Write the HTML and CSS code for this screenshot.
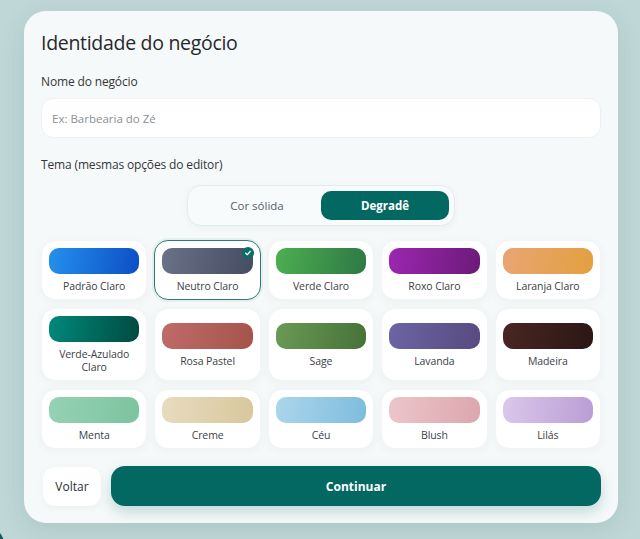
FILE: index.html
```html
<!DOCTYPE html>
<html lang="pt-BR">
<head>
<meta charset="utf-8">
<title>Identidade do negócio</title>
<link rel="stylesheet" href="styles.css">
</head>
<body>
<div class="blob"></div>
<main class="card">
  <h1 class="title">Identidade do negócio</h1>
  <label class="label" for="nome">Nome do negócio</label>
  <input id="nome" class="input" type="text" placeholder="Ex: Barbearia do Zé">
  <div class="label label-tema">Tema (mesmas opções do editor)</div>
  <div class="toggle-wrap">
    <div class="toggle">
      <button class="toggle-btn">Cor sólida</button>
      <button class="toggle-btn active">Degradê</button>
    </div>
  </div>
  <div class="grid">
    <div class="theme"><div class="swatch" style="background:linear-gradient(100deg,#2590ec,#0c4ec6)"></div><span class="name">Padrão Claro</span></div>
    <div class="theme selected"><div class="swatch" style="background:linear-gradient(100deg,#6a7288,#464c62)"></div><span class="name">Neutro Claro</span><span class="check"><svg viewBox="0 0 12 12" width="8" height="8"><path d="M2.5 6.3 L5 8.6 L9.5 3.4" fill="none" stroke="#fff" stroke-width="1.8" stroke-linecap="round" stroke-linejoin="round"/></svg></span></div>
    <div class="theme"><div class="swatch" style="background:linear-gradient(100deg,#4caf50,#2f7845)"></div><span class="name">Verde Claro</span></div>
    <div class="theme"><div class="swatch" style="background:linear-gradient(100deg,#9c27b0,#6c1a78)"></div><span class="name">Roxo Claro</span></div>
    <div class="theme"><div class="swatch" style="background:linear-gradient(100deg,#e8a574,#e3a03e)"></div><span class="name">Laranja Claro</span></div>

    <div class="theme"><div class="swatch" style="background:linear-gradient(100deg,#00897b,#004a40)"></div><span class="name">Verde-Azulado Claro</span></div>
    <div class="theme"><div class="swatch" style="background:linear-gradient(100deg,#c06a6a,#a5544a)"></div><span class="name">Rosa Pastel</span></div>
    <div class="theme"><div class="swatch" style="background:linear-gradient(100deg,#6a9a55,#467238)"></div><span class="name">Sage</span></div>
    <div class="theme"><div class="swatch" style="background:linear-gradient(100deg,#6c64a4,#584a80)"></div><span class="name">Lavanda</span></div>
    <div class="theme"><div class="swatch" style="background:linear-gradient(100deg,#4a2622,#2a1714)"></div><span class="name">Madeira</span></div>

    <div class="theme"><div class="swatch" style="background:linear-gradient(100deg,#96d2b4,#7cc39f)"></div><span class="name">Menta</span></div>
    <div class="theme"><div class="swatch" style="background:linear-gradient(100deg,#e8dcc0,#d8c79c)"></div><span class="name">Creme</span></div>
    <div class="theme"><div class="swatch" style="background:linear-gradient(100deg,#acd6ec,#7dbcdc)"></div><span class="name">Céu</span></div>
    <div class="theme"><div class="swatch" style="background:linear-gradient(100deg,#ecc6ca,#dca6ae)"></div><span class="name">Blush</span></div>
    <div class="theme"><div class="swatch" style="background:linear-gradient(100deg,#dbc8ea,#b99dd5)"></div><span class="name">Lilás</span></div>
  </div>
  <div class="actions">
    <button class="btn-back">Voltar</button>
    <button class="btn-next">Continuar</button>
  </div>
</main>
</body>
</html>
```

FILE: styles.css
```css
* { box-sizing: border-box; }
html, body { margin: 0; padding: 0; }
body {
  background: #bfd7d7;
  font-family: "Open Sans", "Noto Sans", sans-serif;
  color: #2b2f33;
  width: 640px;
  height: 539px;
  overflow: hidden;
  position: relative;
}
.blob {
  position: absolute;
  left: -30px;
  top: 527px;
  width: 34px;
  height: 34px;
  border-radius: 50%;
  background: #0e5f5b;
}
.card {
  margin: 11px 0 0 24px;
  width: 594px;
  height: 512px;
  background: #f6f9f9;
  border-radius: 22px;
  padding: 18px 17px 0 17px;
  display: flex;
  flex-direction: column;
  box-shadow: 0 6px 24px rgba(40, 80, 80, 0.12);
  position: relative;
}
.title {
  margin: 0;
  font-size: 19.5px;
  line-height: 28px;
  font-weight: 500;
  color: #26292c;
  letter-spacing: -0.3px;
}
.label {
  display: block;
  margin-top: 16px;
  font-size: 12px;
  line-height: 18px;
  font-weight: 500;
  color: #33373b;
  letter-spacing: -0.15px;
}
.label-tema { margin-top: 18px; }
.input {
  margin-top: 7px;
  height: 40px;
  width: 100%;
  border: 1px solid #edf1f1;
  border-radius: 12px;
  background: #ffffff;
  padding: 0 10px;
  font-family: inherit;
  font-size: 11.5px;
  color: #333;
  outline: none;
}
.input::placeholder { color: #8a8f94; }
.toggle-wrap {
  margin-top: 11px;
  display: flex;
  justify-content: center;
}
.toggle {
  width: 268px;
  height: 41px;
  padding: 5px;
  display: flex;
  border: 1px solid #e3ebeb;
  border-radius: 14px;
  background: #f8fbfb;
  box-shadow: 0 2px 6px rgba(40, 80, 80, 0.05);
}
.toggle-btn {
  flex: 1;
  border: none;
  background: transparent;
  border-radius: 10px;
  font-family: inherit;
  font-size: 11.5px;
  font-weight: 500;
  color: #56606b;
  padding: 0;
}
.toggle-btn.active {
  background: #036862;
  color: #ffffff;
  font-weight: 700;
}
.grid {
  margin-top: 14px;
  display: grid;
  grid-template-columns: repeat(5, 1fr);
  column-gap: 7px;
  row-gap: 8px;
}
.theme {
  position: relative;
  background: #ffffff;
  border-radius: 14px;
  min-height: 60px;
  padding: 7px 7px 6px;
  display: flex;
  flex-direction: column;
  align-items: center;
  justify-content: center;
  box-shadow: 0 2px 8px rgba(40, 80, 80, 0.05);
  border: 1px solid #f2f5f5;
}
.theme.selected {
  border: 1.5px solid #2c7b76;
  box-shadow: 0 0 0 2px rgba(44, 123, 118, 0.08);
}
.swatch {
  width: 100%;
  height: 26px;
  border-radius: 10px;
}
.name {
  margin-top: 6px;
  font-size: 10.5px;
  line-height: 13px;
  color: #3c4146;
  text-align: center;
  letter-spacing: -0.1px;
}
.check {
  position: absolute;
  top: 6px;
  right: 6px;
  width: 12px;
  height: 12px;
  border-radius: 50%;
  background: #0c6c66;
  display: flex;
  align-items: center;
  justify-content: center;
}
.actions {
  margin-top: 17px;
  display: flex;
  gap: 10px;
  align-items: center;
}
.btn-back {
  width: 58px;
  height: 39px;
  margin-left: 2px;
  border: none;
  background: #ffffff;
  border-radius: 12px;
  font-family: inherit;
  font-size: 12px;
  font-weight: 500;
  color: #2b2f33;
  box-shadow: 0 2px 6px rgba(40, 80, 80, 0.05);
  padding: 0;
}
.btn-next {
  flex: 1;
  height: 40px;
  border: none;
  border-radius: 14px;
  background: #036862;
  color: #ffffff;
  font-family: inherit;
  font-size: 12px;
  font-weight: 700;
  box-shadow: 0 6px 14px rgba(3, 104, 98, 0.22);
}
```
